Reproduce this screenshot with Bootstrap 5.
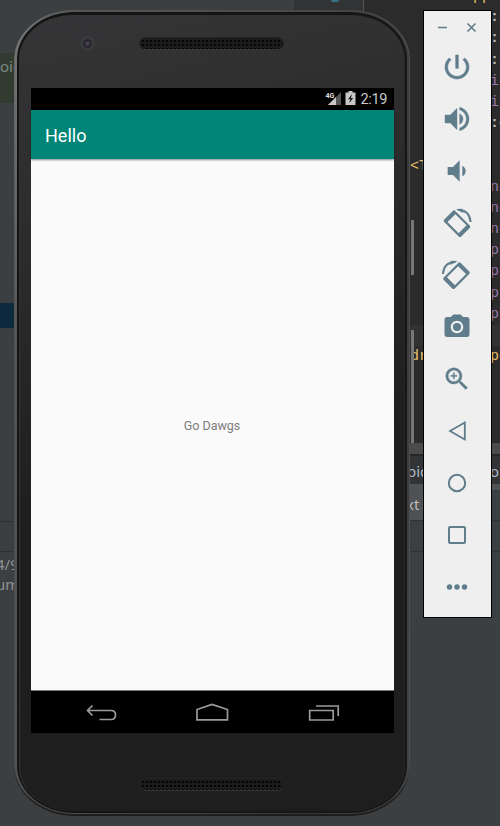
<!DOCTYPE html>
<html lang="en">
<head>
<meta charset="utf-8">
<meta name="viewport" content="width=device-width, initial-scale=1">
<title>Hello</title>
<link href="https://cdn.jsdelivr.net/npm/bootstrap@5.3.0/dist/css/bootstrap.min.css" rel="stylesheet">
<style>
html,body{height:826px;overflow:hidden}
body{background:#3c3f41;font-family:Roboto,sans-serif;line-height:1}
.desk{width:500px;height:826px}
svg{display:block;flex:none}
/* IDE behind the emulator */
.ide{font-family:"Noto Sans",sans-serif;font-size:15px;color:#8d9194}
.ide-side{width:294px}
.ide-side>div{flex:none;padding-left:0;overflow:hidden;white-space:nowrap}
.hint{height:50px;margin-top:53px;background:#323b30;color:#7b8a86;padding-top:6px}
.sel{height:25px;margin-top:200px;background:#0d293e}
.log{height:31px;margin-top:193px;border-top:1px solid #2f3133;border-bottom:1px solid #2f3133}
.ide-side>.shift{margin-left:-4px;line-height:20px;padding-top:2px}
.ide-tabs{width:69px;height:12px;background:#313335}
.dotty{width:8px;height:2px;margin-left:37px;background:#3a6f86;border-radius:0 0 4px 4px}
.editor{width:137px;flex:none}
.code{height:443px;background:#2b2b2b;border-left:1px solid #555;font:15px/21.2px "Liberation Mono",monospace;color:#9876aa;position:relative}
.ln{height:21.2px;padding-left:46px;white-space:pre}
.ln .lt{width:80px;flex:none;overflow:hidden;color:#e8bf6a}
.ln b{color:#bababa}
.ln .tag{color:#e8bf6a}
.code-in{margin-top:-14px}
.cur{background:#323232}
.sb{left:47px;width:3px;background:#777}
.sb1{top:220px;height:55px}.sb2{top:330px;height:113px}
.hs{height:11px;background:#4b4b4b}
.crumb{height:30px;background:#313335;border-top:2px solid #252729;color:#a9b7c6;padding-left:44px;line-height:31px}
.crumb .c1{width:83px}
.tabrow{height:37px;color:#bbb;line-height:41px;border-bottom:1px solid #2f3133}
.tabrow .on{width:124px;padding-left:43px;background:#4e5254}
.tabrow .off{border-top:6px solid #4e5254}
.foot{height:31px;border-bottom:1px solid #2f3133}
/* phone */
.phone{left:14px;top:10px;width:396px;height:806px;border-radius:60px/50px;padding:2px 3px 3px 3px;background:linear-gradient(100deg,#777 0,#555 12%,#4b4b4b 50%,#3a3a3a 80%,#444 100%);box-shadow:inset 0 -2px 1px #1c1c1c,inset -1px 0 0 #555}
.rim{border-radius:57px/47px;background:linear-gradient(100deg,#131313,#171717);padding:3px 2px 2px 2px}
.shell{border-radius:54px/44px;background:linear-gradient(165deg,#353537 0,#2c2c2d 25%,#1e1e1e 58%,#1e1e1e 100%);padding:0 11px;border-left:1px solid #343434;border-right:1px solid #262626}
.ear{height:73px}
.chin{height:78px;}
.cam{width:15px;height:15px;margin:21px 0 0 49px;border-radius:50%;background:radial-gradient(circle,#494052 0 1px,#211f28 3.5px,#393a3c 5px)}
.spk{width:145px;height:13px;border-radius:7px;border:1px solid #252525;border-bottom-color:#363636;background:radial-gradient(circle,#060606 0 .9px,transparent 1.4px) 1px 1px/4px 4px #1b1b1b}
.ear .spk{margin:22px 0 0 44px}
.chin .spk{margin:45px 0 0 108px}
.screen{width:363px;height:645px;background:#fafafa;margin-left:-1px;transform:translateX(1px)}
.screen{margin-left:0;transform:none}
.status{height:22px;background:#000}
.status svg{margin-right:6px}
.appbar{height:49px;background:#018577;color:#fff;font-size:18px;padding-left:14px;box-shadow:0 1px 2px rgba(0,0,0,.45);padding-top:2px}
.body-txt{font-size:12.5px;color:#7c7c7c;padding-top:3px;padding-right:1px}
.nv{height:43px;background:#000;border-top:1px solid #777}
/* emulator controls */
.tools{left:423px;top:10px;width:69px;height:608px;background:#efefef;border:1px solid #000;color:#607d8b}
.tools .win{height:30px;padding-top:1px}
.tools .it{height:52px;flex:none;padding-right:2px}
</style>
<script src="https://cdn.jsdelivr.net/npm/bootstrap@5.3.0/dist/js/bootstrap.bundle.min.js"></script>
</head>
<body>
<main class="desk position-relative overflow-hidden">
  <div class="ide d-flex h-100">
    <div class="ide-side d-flex flex-column flex-shrink-0">
      <div class="hint">oid</div>
      <div class="sel"></div>
      <div class="log"></div>
      <div class="shift">4/9<br>um</div>
    </div>
    <div class="ide-tabs flex-shrink-0"><div class="dotty"></div></div>
    <div class="editor">
      <div class="code overflow-hidden">
        <div class="code-in">
          <div class="ln d-flex"><span class="lt">       pp</span></div>
          <div class="ln d-flex"><span class="lt"></span><b>:</b>a</div>
          <div class="ln d-flex"><span class="lt"></span><b>:</b>t</div>
          <div class="ln d-flex"><span class="lt"></span><b>:</b>a</div>
          <div class="ln d-flex"><span class="lt"></span>id</div>
          <div class="ln d-flex"><span class="lt"></span>id</div>
          <div class="ln d-flex"><span class="lt"></span><b>:c</b></div>
          <div class="ln"></div>
          <div class="ln d-flex"><span class="lt">&lt;T</span></div>
          <div class="ln d-flex"><span class="lt"></span>nd</div>
          <div class="ln d-flex"><span class="lt"></span>nd</div>
          <div class="ln d-flex"><span class="lt"></span>nd</div>
          <div class="ln d-flex"><span class="lt"></span>pp</div>
          <div class="ln d-flex"><span class="lt"></span>pp</div>
          <div class="ln d-flex"><span class="lt"></span>pp</div>
          <div class="ln d-flex"><span class="lt"></span>pp</div>
          <div class="ln cur"></div>
          <div class="ln d-flex"><span class="lt">dr</span><span class="tag">pe</span></div>
        </div>
        <div class="sb sb1 position-absolute"></div>
        <div class="sb sb2 position-absolute"></div>
      </div>
      <div class="hs"></div>
      <div class="crumb d-flex"><span class="c1">pid</span>o</div>
      <div class="tabrow d-flex"><div class="on">xt</div><div class="off flex-grow-1"></div></div>
      <div class="foot"></div>
    </div>
  </div>

  <section class="phone position-absolute">
    <div class="rim h-100">
      <div class="shell h-100 d-flex flex-column">
        <div class="ear d-flex flex-shrink-0"><div class="cam"></div><div class="spk"></div></div>
        <div class="screen d-flex flex-column flex-shrink-0">
          <div class="status d-flex align-items-center justify-content-end flex-shrink-0">
            <svg width="63" height="20" viewBox="325 89 63 20">
              <path d="M341 92v13h-13z" fill="#555"/><path d="M336 97v8h-8z" fill="#c8c8c8"/>
              <text x="325.500" y="98" font-family="Roboto,sans-serif" font-weight="700" font-size="8" fill="#ddd" textLength="9" lengthAdjust="spacingAndGlyphs">4G</text>
              <path d="M348.500 91h4v1.500h3v12.500h-10v-12.500h3z" fill="#c8c8c8"/><path d="M352 94l-4 5.200h2.200l-1 4 4-5.200h-2.200z" fill="#222"/>
              <text x="360.500" y="104" font-family="Roboto,sans-serif" font-size="14.500" fill="#c8c8c8" textLength="27">2:19</text>
            </svg>
          </div>
          <header class="appbar d-flex align-items-center flex-shrink-0">Hello</header>
          <div class="flex-grow-1 d-flex align-items-center justify-content-center"><span class="body-txt">Go Dawgs</span></div>
          <nav class="nv flex-shrink-0">
            <svg width="363" height="42" viewBox="31 691 363 42" fill="none" stroke="#9b9b9b" stroke-width="1.700">
              <path d="M92.500 705.500l-5 5 5 5M88 710.500h23q4.500 0 4.500 4.500t-4.500 4.500h-11.500"/>
              <path d="M197 719.800v-10.300l15-5 15.500 5v10.300z"/>
              <path d="M309.700 710.500h23.500v9.500h-23.500zM316 706h22.200v10"/>
            </svg>
          </nav>
        </div>
        <div class="chin flex-shrink-0 d-flex"><div class="spk"></div></div>
      </div>
    </div>
  </section>

  <aside class="tools position-absolute d-flex flex-column">
    <div class="win flex-shrink-0">
      <svg width="67" height="30" viewBox="424 12 67 30" stroke="currentColor" stroke-width="1.600"><path d="M438 27.500h9M467.500 23.500l8 8M475.500 23.500l-8 8"/></svg>
    </div>
    <div class="it d-flex align-items-center justify-content-center"><svg width="32" height="32" viewBox="0 0 24 24" fill="currentColor"><path d="M13 3h-2v10h2V3zm4.830 2.170l-1.420 1.420C17.990 7.860 19 9.810 19 12c0 3.870-3.130 7-7 7s-7-3.130-7-7c0-2.190 1.010-4.140 2.580-5.420L6.170 5.170C4.230 6.820 3 9.260 3 12c0 4.970 4.030 9 9 9s9-4.030 9-9c0-2.740-1.230-5.180-3.170-6.830z" stroke="currentColor" stroke-width=".4"/></svg></div>
    <div class="it d-flex align-items-center justify-content-center"><svg width="32" height="32" viewBox="0 0 24 24" fill="currentColor"><path d="M3 9v6h4l5 5V4L7 9H3zm13.500 3c0-1.770-1.020-3.290-2.500-4.030v8.050c1.480-.73 2.500-2.250 2.500-4.020zM14 3.230v2.060c2.890.86 5 3.540 5 6.710s-2.110 5.850-5 6.710v2.060c4.010-.91 7-4.490 7-8.770s-2.990-7.860-7-8.770z" stroke="currentColor" stroke-width=".3"/></svg></div>
    <div class="it d-flex align-items-center justify-content-center"><svg width="32" height="32" viewBox="0 0 24 24" fill="currentColor"><path d="M18.500 12c0-1.770-1.020-3.290-2.500-4.030v8.050c1.480-.73 2.500-2.250 2.500-4.020zM5 9v6h4l5 5V4L9 9H5z"/></svg></div>
    <div class="it d-flex align-items-center justify-content-center"><svg width="32" height="32" viewBox="0 0 32 32"><g id="rot"><path transform="translate(16 16.700) rotate(45)" fill="currentColor" fill-rule="evenodd" d="M-10.200-7.800h20.400q1.800 0 1.800 1.800v12q0 1.800-1.800 1.800h-20.400q-1.800 0-1.800-1.800v-12q0-1.800 1.800-1.800zM-7.900-5.600v11.200h15.800v-11.200z"/><path d="M17 2.800Q28.500 3.200 29.600 15" fill="none" stroke="currentColor" stroke-width="2"/><path d="M14.800 2.200l6.500-.4 1 4.200z" fill="currentColor"/></g></svg></div>
    <div class="it d-flex align-items-center justify-content-center"><svg width="32" height="32" viewBox="0 0 32 32"><use href="#rot" transform="translate(31.500 0) scale(-1 1)"/></svg></div>
    <div class="it d-flex align-items-center justify-content-center"><svg width="30" height="30" viewBox="0 0 24 24" fill="currentColor"><circle cx="12" cy="12" r="3.200"/><path d="M9 2L7.170 4H4c-1.100 0-2 .9-2 2v12c0 1.100.9 2 2 2h16c1.100 0 2-.9 2-2V6c0-1.100-.9-2-2-2h-3.170L15 2H9zm3 15c-2.760 0-5-2.240-5-5s2.240-5 5-5 5 2.240 5 5-2.240 5-5 5z"/></svg></div>
    <div class="it d-flex align-items-center justify-content-center"><svg width="30" height="30" viewBox="0 0 24 24" fill="currentColor"><path d="M15.500 14h-.79l-.28-.27C15.410 12.590 16 11.110 16 9.500 16 5.910 13.090 3 9.500 3S3 5.910 3 9.500 5.910 16 9.500 16c1.610 0 3.090-.59 4.230-1.570l.27.28v.79l5 4.990L20.490 19l-4.990-5zm-6 0C7.010 14 5 11.990 5 9.500S7.010 5 9.500 5 14 7.010 14 9.500 11.990 14 9.500 14zm2.500-4h-2v2H9v-2H7V9h2V7h1v2h2v1z" stroke="currentColor" stroke-width=".25"/></svg></div>
    <div class="it d-flex align-items-center justify-content-center"><svg width="32" height="32" viewBox="0 0 32 32" fill="none" stroke="currentColor" stroke-width="1.800"><path d="M23.800 7.500v17L9 16z"/></svg></div>
    <div class="it d-flex align-items-center justify-content-center"><svg width="32" height="32" viewBox="0 0 32 32" fill="none" stroke="currentColor" stroke-width="2"><circle cx="16" cy="16" r="8.200"/></svg></div>
    <div class="it d-flex align-items-center justify-content-center"><svg width="32" height="32" viewBox="0 0 32 32" fill="none" stroke="currentColor" stroke-width="2"><rect x="8" y="8" width="16" height="16" rx="1"/></svg></div>
    <div class="it d-flex align-items-center justify-content-center"><svg width="32" height="32" viewBox="0 0 32 32" fill="currentColor"><circle cx="8.500" cy="16" r="2.700"/><circle cx="16" cy="16" r="2.700"/><circle cx="23.500" cy="16" r="2.700"/></svg></div>
  </aside>
</main>
</body>
</html>
